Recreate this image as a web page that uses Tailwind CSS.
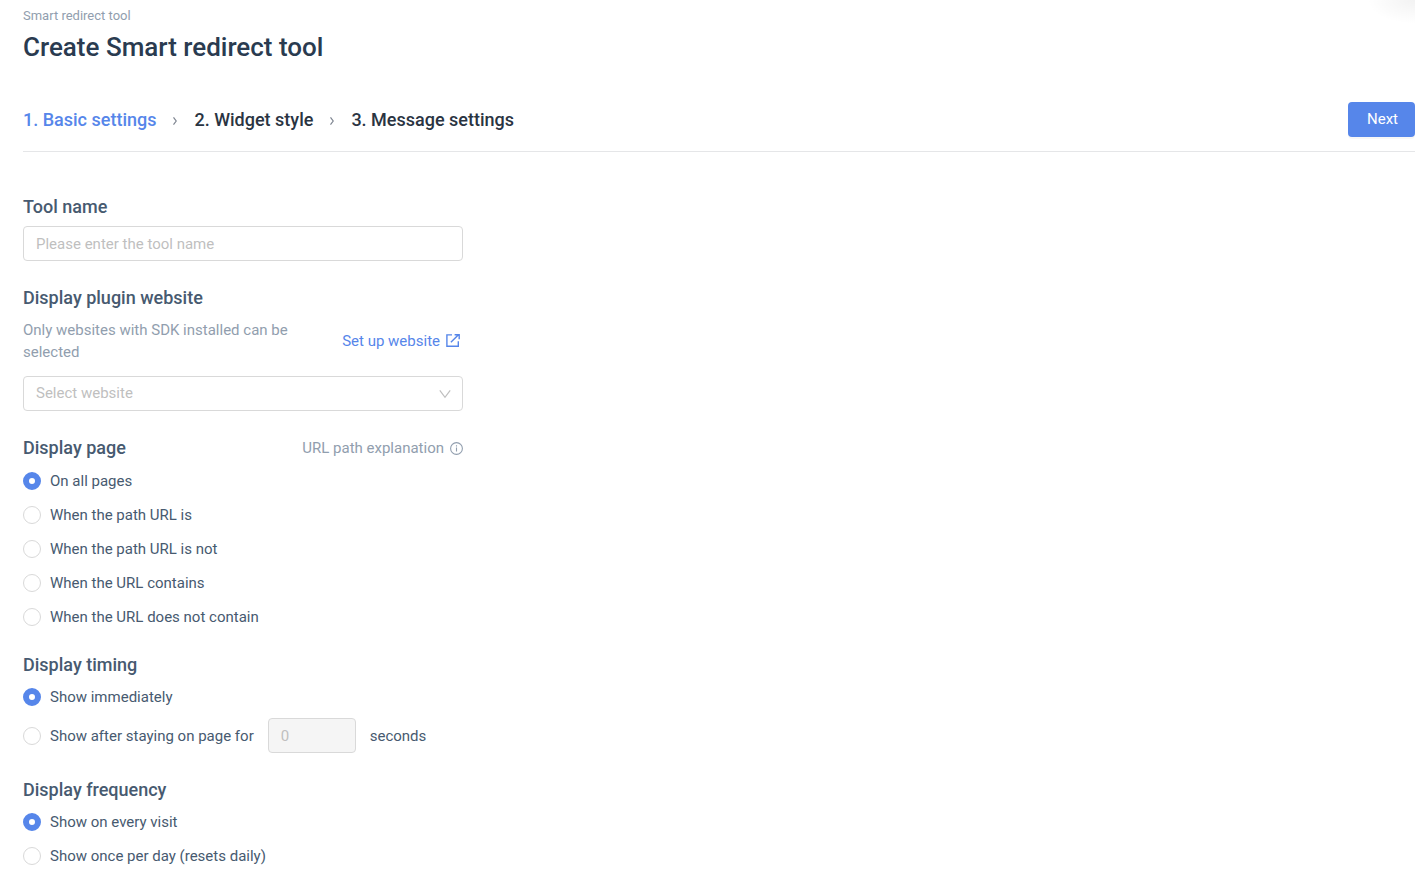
<!DOCTYPE html>
<html lang="en">
<head>
    <meta charset="UTF-8">
    <meta name="viewport" content="width=device-width, initial-scale=1.0">
    <title>Create Smart redirect tool</title>
    <script src="https://cdn.jsdelivr.net/npm/@tailwindcss/browser@4"></script>
</head>
<body class="bg-white font-['Roboto','Liberation_Sans',sans-serif] text-[15px] leading-[22px] text-[#475a70] overflow-x-hidden">
    <!-- Shadow of the floating panel in the corner -->
    <div class="absolute top-0 right-0 w-12 h-6 bg-radial-[at_100%_0%] from-black/5 to-transparent to-70%"></div>

    <div class="pl-[23px] pt-[6px] pb-[6px]">
        <!-- Header -->
        <header>
            <p class="text-[13px] leading-5 text-[#919eae]">Smart redirect tool</p>
            <h1 class="mt-[3px] text-[26px] leading-9 font-medium text-[#2a3b50]">Create Smart redirect tool</h1>
        </header>

        <!-- Steps -->
        <div class="mt-[37px] pb-[14px] flex items-center justify-between border-b border-[#e5e6e8]">
            <ol class="flex items-center text-[18px] font-medium text-[#2a3442]">
                <li class="text-[#5686ea]">1. Basic settings</li>
                <li class="w-[38px] flex justify-center" aria-hidden="true">
                    <svg class="w-2 h-3" viewBox="0 0 8 12" fill="none" stroke="#7d8490" stroke-width="1.2"><path d="M2.5 3.4 5.2 7 2.5 10.6"/></svg>
                </li>
                <li>2. Widget style</li>
                <li class="w-[38px] flex justify-center" aria-hidden="true">
                    <svg class="w-2 h-3" viewBox="0 0 8 12" fill="none" stroke="#7d8490" stroke-width="1.2"><path d="M2.5 3.4 5.2 7 2.5 10.6"/></svg>
                </li>
                <li>3. Message settings</li>
            </ol>
            <button type="button" class="h-[35px] w-[67px] pb-[2px] pl-[2px] rounded bg-[#5686ea] text-white shadow-[0_2px_0_rgba(0,0,0,0.03)]">Next</button>
        </div>

        <!-- Form -->
        <form class="mt-[43px] max-w-[440px] flex flex-col gap-[25px]">
            <div>
                <label for="toolName" class="block text-[18px] leading-6 font-medium">Tool name</label>
                <input id="toolName" type="text" placeholder="Please enter the tool name" class="mt-[7px] block w-full h-[35px] px-3 rounded border border-[#d9d9d9] placeholder:text-[#bfbfbf] outline-none">
            </div>

            <div>
                <label for="website" class="block text-[18px] leading-6 font-medium">Display plugin website</label>
                <div class="mt-[9px] flex items-center justify-between">
                    <p class="w-[290px] text-[#919eae]">Only websites with SDK installed can be selected</p>
                    <a href="#" class="flex items-center gap-[6px] pr-[3px] text-[#5686ea]">
                        Set up website
                        <svg class="w-[14px] h-[14px]" viewBox="0 0 14 14" fill="none" stroke="currentColor" stroke-width="1.4"><path d="M6 .9H.9v11.4h11.4V7.3M4.9 8.3 12.7.6M8.6.7h4.6v4.6"/></svg>
                    </a>
                </div>
                <div class="relative mt-[13px]">
                    <select id="website" class="block w-full h-[35px] px-3 pb-[2px] rounded border border-[#d9d9d9] bg-white text-[#bfbfbf] appearance-none outline-none">
                        <option>Select website</option>
                    </select>
                    <svg class="absolute right-3 top-3 w-3 h-3 pointer-events-none" viewBox="0 0 12 12" fill="none" stroke="#bfbfbf" stroke-width="1.2"><path d="M.8 2.3 6 9.3l5.2-7"/></svg>
                </div>
            </div>

            <fieldset>
                <div class="flex items-center justify-between leading-6">
                    <legend class="text-[18px] font-medium">Display page</legend>
                    <span class="flex items-center gap-[6px] text-[#919eae]">
                        URL path explanation
                        <svg class="w-[13px] h-[13px]" viewBox="0 0 13 13" fill="none" stroke="currentColor" stroke-width="1.1"><circle cx="6.5" cy="6.5" r="5.9"/><path d="M6.5 5.6v4M6.5 3.3v1.2"/></svg>
                    </span>
                </div>
                <div class="mt-[10px] flex flex-col gap-3">
                    <label class="flex items-center gap-[9px]">
                        <input type="radio" name="page" checked class="size-[18px] appearance-none rounded-full border border-[#d9d9d9] bg-white checked:border-[6px] checked:border-[#5686ea]">
                        On all pages
                    </label>
                    <label class="flex items-center gap-[9px]">
                        <input type="radio" name="page" class="size-[18px] appearance-none rounded-full border border-[#d9d9d9] bg-white checked:border-[6px] checked:border-[#5686ea]">
                        When the path URL is
                    </label>
                    <label class="flex items-center gap-[9px]">
                        <input type="radio" name="page" class="size-[18px] appearance-none rounded-full border border-[#d9d9d9] bg-white checked:border-[6px] checked:border-[#5686ea]">
                        When the path URL is not
                    </label>
                    <label class="flex items-center gap-[9px]">
                        <input type="radio" name="page" class="size-[18px] appearance-none rounded-full border border-[#d9d9d9] bg-white checked:border-[6px] checked:border-[#5686ea]">
                        When the URL contains
                    </label>
                    <label class="flex items-center gap-[9px]">
                        <input type="radio" name="page" class="size-[18px] appearance-none rounded-full border border-[#d9d9d9] bg-white checked:border-[6px] checked:border-[#5686ea]">
                        When the URL does not contain
                    </label>
                </div>
            </fieldset>

            <fieldset>
                <legend class="text-[18px] leading-6 font-medium">Display timing</legend>
                <div class="mt-[9px] flex flex-col gap-[10px]">
                    <label class="flex items-center gap-[9px]">
                        <input type="radio" name="timing" checked class="size-[18px] appearance-none rounded-full border border-[#d9d9d9] bg-white checked:border-[6px] checked:border-[#5686ea]">
                        Show immediately
                    </label>
                    <div class="flex items-center gap-[14px]">
                        <label class="flex items-center gap-[9px]">
                            <input type="radio" name="timing" class="size-[18px] appearance-none rounded-full border border-[#d9d9d9] bg-white checked:border-[6px] checked:border-[#5686ea]">
                            Show after staying on page for
                        </label>
                        <input id="seconds" type="text" value="0" disabled class="w-[88px] h-[35px] px-3 rounded border border-[#d9d9d9] bg-[#f5f5f5] text-[#bfbfbf]">
                        <label for="seconds">seconds</label>
                    </div>
                </div>
            </fieldset>

            <fieldset>
                <legend class="text-[18px] leading-6 font-medium">Display frequency</legend>
                <div class="mt-[9px] flex flex-col gap-3">
                    <label class="flex items-center gap-[9px]">
                        <input type="radio" name="frequency" checked class="size-[18px] appearance-none rounded-full border border-[#d9d9d9] bg-white checked:border-[6px] checked:border-[#5686ea]">
                        Show on every visit
                    </label>
                    <label class="flex items-center gap-[9px]">
                        <input type="radio" name="frequency" class="size-[18px] appearance-none rounded-full border border-[#d9d9d9] bg-white checked:border-[6px] checked:border-[#5686ea]">
                        Show once per day (resets daily)
                    </label>
                </div>
            </fieldset>
        </form>
    </div>
</body>
</html>
